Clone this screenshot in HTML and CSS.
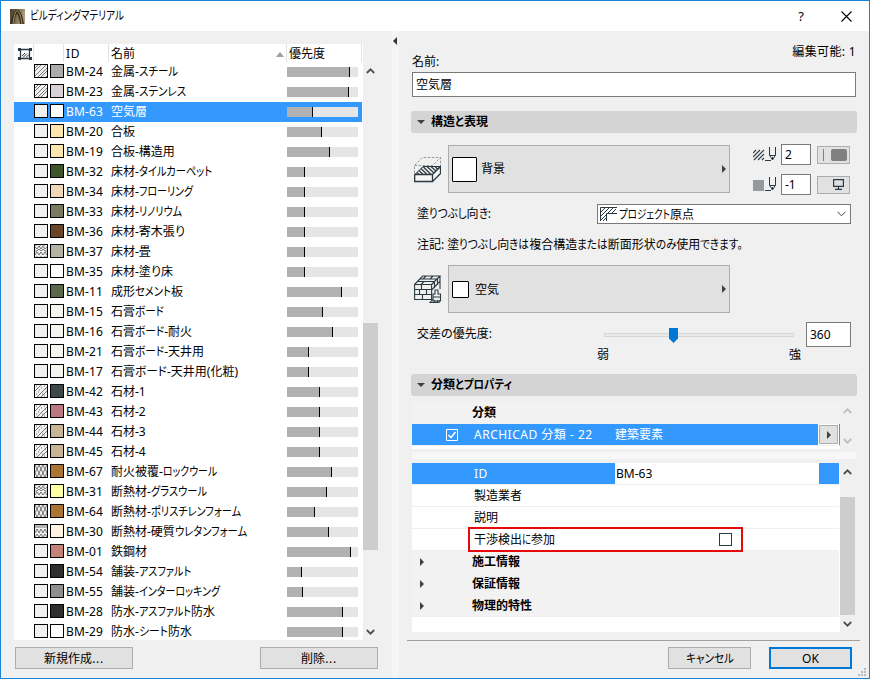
FILE: index.html
```html
<!DOCTYPE html>
<html lang="ja">
<head>
    <meta charset="UTF-8">
    <title>ビルディングマテリアル</title>
    <link rel="stylesheet" href="styles.css">
</head>
<body>
<div class="window">
    <div class="titlebar">
        <svg class="app-icon" width="15" height="15" viewBox="0 0 15 15">
            <defs><linearGradient id="bronze" x2="1" y2=".3"><stop offset="0" stop-color="#4a3d2d"/><stop offset=".5" stop-color="#75654a"/><stop offset="1" stop-color="#b0a080"/></linearGradient></defs>
            <rect width="15" height="15" fill="url(#bronze)"/>
            <path d="M0 15C2 7 4 1 7 1c4 0 6 7 7 14h-4C9 8 8 5 7 5c-1 0-2 4-3 10z" fill="#3a2e20"/>
            <path d="M3 15C4 8 5 2 7 2c2 0 4 5 5 13" fill="none" stroke="#a8946c"/>
        </svg>
        <span class="title" data-w="94">ビルディングマテリアル</span>
        <span class="help">?</span>
        <svg class="close" width="11" height="11" viewBox="0 0 11 11"><path d="M.5.5l10 10M10.5.5l-10 10" stroke="#000" stroke-width="1.1"/></svg>
    </div>

    <div class="main">
        <!-- Lista de materiales -->
        <div class="left">
            <div class="list-wrap">
                <div class="list">
                    <div class="list-head">
                        <span class="h-icon"><svg width="14" height="12" viewBox="0 0 14 12" fill="none" stroke="#2b3a42"><path d="M1 1.500h12M1 10.500h12M2.500 2v8M11.500 2v8" stroke-width="1.300"/><path d="M4 8l3-3M5 9.500l4-4M8 9.500l3-3"/><path d="M0 0h3v3H0zM11 0h3v3h-3zM0 9h3v3H0zM11 9h3v3h-3z" fill="#2b3a42" stroke="none"/></svg></span>
                        <span class="h-swatch"></span>
                        <span class="h-id">ID</span>
                        <span class="h-name">名前<i class="sort"></i></span>
                        <span class="h-prio">優先度</span>
                    </div>
                    <div id="rows"></div>
                </div>
                <div class="scroll tall">
                    <svg class="chev" width="9" height="6" viewBox="0 0 9 6"><path d="M.8 5l3.700-3.700L8.200 5"/></svg>
                    <div class="thumb"></div>
                    <svg class="chev down" width="9" height="6" viewBox="0 0 9 6"><path d="M.8 1l3.700 3.700L8.200 1"/></svg>
                </div>
            </div>
            <div class="left-buttons">
                <button>新規作成<span class="dots">...</span></button>
                <button>削除<span class="dots">...</span></button>
            </div>
        </div>

        <div class="splitter"><i class="collapse"></i></div>

        <!-- Panel de propiedades -->
        <div class="right">
            <div class="name-row"><span class="name-label">名前:</span><span class="editable">編集可能: 1</span></div>
            <div class="field name-field">空気層</div>

            <div class="section-bar first"><i class="open"></i><span data-w="57">構造と表現</span></div>

            <div class="fill-row">
                <svg width="27" height="26" viewBox="0 0 27 26" fill="none" stroke="#2b3a42">
                    <path d="M.5 16V8.500L8.500.5h18V9M.5 8.500h18l8-8M18.500 8.500v3" stroke="#999" stroke-dasharray="2.500 1.500"/>
                    <path d="M1 17.500l8-8h17l-7.500 8z" fill="#f0f0f0"/>
                    <path d="M3 15.500l2 2M5 13.500l4 4M7 11.500l6 6M9 9.500l8 8M13 9.500l7 6.500M17 9.500l5 4.500M21 9.500l3 3" stroke-width="1.200"/>
                    <path d="M.7 17.500h17.800v7H.7zM18.500 17.500l8-8v7l-8 8" stroke-width="1.300" fill="#f6f6f6"/>
                </svg>
                <div class="picker"><i class="box big"></i><span>背景</span><i class="arrow"></i></div>
                <div class="pens">
                    <div class="pen">
                        <svg width="24" height="16" viewBox="0 0 24 16" fill="none" stroke="#2b3a42"><path d="M0 6l3-3M0 10l7-7M1 13l10-10M5 13l6-6M9 13l2-2" stroke-width="1.100"/><path d="M12 13.500h6M16.500 0v8l3 5 3-5V0M16.500 8.500h6M19.500 10v3"/></svg>
                        <div class="field num">2</div>
                        <div class="mini"><i class="line"></i><i class="pill"></i></div>
                    </div>
                    <div class="pen">
                        <svg width="24" height="16" viewBox="0 0 24 16" fill="none" stroke="#2b3a42"><path d="M0 3h11v11H0z" fill="#949a9e" stroke="none"/><path d="M12 13.500h6M16.500 0v8l3 5 3-5V0M16.500 8.500h6M19.500 10v3"/></svg>
                        <div class="field num">-1</div>
                        <div class="mini"><svg width="11" height="11" viewBox="0 0 11 11" fill="none" stroke="#2b3a42" stroke-width="1.200"><path d="M.6.6h9.800v6.800H.6zM5.500 7.500v3M2 10.400h7"/></svg></div>
                    </div>
                </div>
            </div>

            <div class="orient-row">
                <span data-w="74">塗りつぶし向き:</span>
                <div class="select">
                    <svg width="17" height="14" viewBox="0 0 17 14" fill="none" stroke="#2b3a42"><path d="M.5 14V.5H17M6.500 14V6.500H17"/><path d="M1 5l4-4M1 9l8-8M1 13l5-5M8 6l5-5M12 6l4-4M3 14l3-3"/></svg>
                    <span data-w="75">プロジェクト原点</span>
                    <svg class="drop" width="9" height="6" viewBox="0 0 9 6"><path d="M.5.8l4 4 4-4" fill="none" stroke="#444"/></svg>
                </div>
            </div>
            <div class="note"><span data-w="326">注記: 塗りつぶし向きは複合構造または断面形状のみ使用できます。</span></div>

            <div class="surface-row">
                <svg width="28" height="29" viewBox="0 0 28 29" fill="none" stroke="#2b3a42" stroke-width="1.100">
                    <path d="M.6 9.500h17v15H.6zM.6 14.500h17M.6 19.500h17M7.500 9.500v5M12.500 14.500v5M5.500 14.500v5M8.500 19.500v5"/>
                    <path d="M.6 9.500l8-8.500h17.400l-8.400 8.500M3 6.500h17.500M6 4h17M12 1l-3 3M19 1l-3 3M10 6.500l-3 3M26 1v13M17.600 15l3-3M20.500 7v6M23.500 4v6M20.500 12l3-3M23.500 9l2.500-3"/>
                    <path d="M21 19v-4h3v4h2.500v7H19v-7zM19 22h7.500M19 24l-3 3.500h9l1.500-3M20 27l1-2M23 27l1-2" fill="#f0f0f0"/>
                </svg>
                <div class="picker"><i class="box"></i><span>空気</span><i class="arrow"></i></div>
            </div>

            <div class="priority-row">
                <span data-w="75">交差の優先度:</span>
                <div class="slider">
                    <div class="track"><svg class="knob" width="9" height="15" viewBox="0 0 9 15"><path d="M0 0h9v10.500L4.500 15 0 10.500z" fill="#0078d7"/></svg></div>
                    <div class="ends"><span>弱</span><span>強</span></div>
                </div>
                <div class="field prio">360</div>
            </div>

            <div class="section-bar"><i class="open"></i><span data-w="81">分類とプロパティ</span></div>

            <div class="table classes">
                <div class="cells">
                    <div class="row group"><b>分類</b></div>
                    <div class="row sel">
                        <svg class="check" width="12" height="12" viewBox="0 0 12 12" fill="none" stroke="#fff"><path d="M.5.5h11v11H.5z"/><path d="M2.500 6l2.500 2.500L9.500 3" stroke-width="1.600"/></svg>
                        <span class="key latin">ARCHICAD 分類 - 22</span><span class="val">建築要素</span>
                        <div class="more"><i class="arrow"></i></div>
                    </div>
                </div>
                <div class="scroll off">
                    <svg class="chev" width="9" height="6" viewBox="0 0 9 6"><path d="M.8 5l3.700-3.700L8.200 5"/></svg>
                    <svg class="chev down" width="9" height="6" viewBox="0 0 9 6"><path d="M.8 1l3.700 3.700L8.200 1"/></svg>
                </div>
            </div>
            <div class="grab"></div>
            <div class="table props">
                <div class="cells">
                    <div class="row sel id"><span class="key latin">ID</span><span class="val edit">BM-63</span></div>
                    <div class="row"><span class="key">製造業者</span></div>
                    <div class="row"><span class="key">説明</span></div>
                    <div class="row clash"><span class="key" data-w="81">干渉検出に参加</span><i class="tick"></i><div class="highlight"></div></div>
                    <div class="row group"><i class="arrow"></i><b>施工情報</b></div>
                    <div class="row group"><i class="arrow"></i><b>保証情報</b></div>
                    <div class="row group"><i class="arrow"></i><b>物理的特性</b></div>
                </div>
                <div class="scroll short">
                    <svg class="chev" width="9" height="6" viewBox="0 0 9 6"><path d="M.8 5l3.700-3.700L8.200 5"/></svg>
                    <div class="thumb"></div>
                    <svg class="chev down" width="9" height="6" viewBox="0 0 9 6"><path d="M.8 1l3.700 3.700L8.200 1"/></svg>
                </div>
            </div>

            <div class="footer">
                <button><span data-w="48">キャンセル</span></button>
                <button class="ok">OK</button>
            </div>
        </div>
    </div>
    <svg class="grip" width="8" height="8" viewBox="0 0 8 8" fill="#bbb"><path d="M6 0h2v2H6zM3 3h2v2H3zM6 3h2v2H6zM0 6h2v2H0zM3 6h2v2H3zM6 6h2v2H6z"/></svg>
</div>
<script src="script.js"></script>
</body>
</html>
```
FILE: styles.css
```css
* { box-sizing: border-box; }
body { margin: 0; font-family: "Noto Sans", "Noto Sans CJK JP", sans-serif; font-size: 12px; line-height: 18px; color: #000; }
i { display: block; font-style: normal; }
svg { display: block; flex: none; }
span, b { white-space: nowrap; }
.kana { display: inline-block; font-feature-settings: "palt"; transform-origin: 0 50%; }
.dots { letter-spacing: .7px; }
.latin { letter-spacing: .5px; }

.window { position: relative; width: 870px; height: 679px; border: 1px solid #1883d7; background: #f0f0f0; overflow: hidden; }
.titlebar { display: flex; align-items: center; height: 30px; padding: 0 17px 0 9px; background: #fff; }
.title { margin-left: 5px; }
.help { margin-left: auto; font-size: 13px; }
.close { margin-left: 37px; }
.main { display: flex; height: 647px; }
button { height: 22px; padding: 0; border: 1px solid #adadad; background: #e1e1e1; font: inherit; line-height: 19px; color: #000; }

/* lista */
.left { width: 391px; padding: 13px 0 0 13px; }
.list-wrap { display: flex; height: 596px; }
.list { width: 349px; background: #fff; overflow: hidden; }
.list-head { display: flex; height: 18px; line-height: 20px; }
.list-head > span { border-right: 1px solid #e3e3e3; }
.h-icon { width: 20px; padding: 4px 0 0 4px; }
.h-swatch { width: 30px; }
.h-id { width: 45px; padding-left: 2px; letter-spacing: .6px; }
.h-name { display: flex; align-items: center; justify-content: space-between; width: 178px; padding: 1px 2px 0; }
.h-prio { width: 75px; padding-left: 2px; }
.sort { border: 4.5px solid transparent; border-top: 0; border-bottom: 5px solid #a0a0a0; margin-top: 2px; }
.item { display: flex; align-items: center; width: 348px; height: 20px; padding-left: 20px; }
.item.selected { background: #39f; color: #fff; }
.swatch { width: 14px; height: 14px; margin: -2px 2px 0 0; border: 1px solid #000; background: #f0f0f0; }
.item .id { width: 45px; padding-bottom: 1px; letter-spacing: .15px; }
.item .name { width: 176px; padding-bottom: 1px; }
.bar { width: 71px; height: 10px; background: #e5e5e5; }
.bar i { height: 10px; background: #b1b1b1; border-right: 1px solid #000; }

.scroll { display: flex; flex-direction: column; align-items: center; width: 15px; background: #f0f0f0; }
.chev { fill: none; stroke: #505050; stroke-width: 1.8; }
.chev.down { margin-top: auto; }
.thumb { width: 15px; background: #cdcdcd; }
.tall { padding: 24px 0 5px; }
.tall .thumb { height: 227px; margin-top: 249px; }
.off .chev { stroke: #bfbfbf; }
.off { padding: 6px 0 5px; }
.short { padding: 6px 0 5px; }
.short .thumb { height: 118px; margin-top: 22px; }

.left-buttons { display: flex; gap: 127px; margin: 7px 0 0 1px; }
.left-buttons button { width: 118px; }
.splitter { width: 7px; padding: 6px 0 0 1px; background: #f5f5f5; }
.collapse { width: 4px; border: 4px solid transparent; border-left: 0; border-right-color: #333; }

/* propiedades */
.right { width: 470px; padding: 0 13px; }
.name-row { display: flex; justify-content: space-between; height: 41px; }
.name-label { padding-top: 22px; }
.editable { padding-top: 12px; letter-spacing: .35px; }
.field { border: 1px solid #7a7a7a; background: #fff; padding-left: 3px; }
.name-field { height: 25px; line-height: 23px; }
.section-bar { display: flex; align-items: center; height: 22px; margin: 0 -1px; padding-left: 6px; border-radius: 3px; background: #d4d4d4; font-weight: bold; }
.first { margin-top: 14px; }
.open { margin-right: 6px; border: 4px solid transparent; border-bottom: 0; border-top-color: #404040; }
.arrow { width: 4px; border: 4px solid transparent; border-right: 0; border-left-color: #404040; }
.picker { display: flex; align-items: center; width: 282px; height: 48px; padding: 0 3px; border: 1px solid #adadad; background: #e1e1e1; }
.picker span { padding-top: 1px; }
.picker .arrow { margin-left: auto; }
.box { width: 17px; height: 17px; margin-right: 6px; border: 1px solid #000; border-radius: 1px; background: #fff; }
.big { width: 25px; height: 25px; margin-right: 4px; }
.fill-row, .surface-row { display: flex; align-items: center; padding-left: 2px; }
.fill-row { height: 51px; margin-top: 11px; }
.fill-row .picker { margin: -1px 0 0 7px; }
.fill-row .picker span { padding-top: 0; }
.pens { display: flex; flex-direction: column; gap: 9px; margin-left: 23px; }
.pen { display: flex; align-items: center; }
.num { width: 30px; height: 21px; line-height: 19px; margin: 0 6px 0 4px; }
.mini { display: flex; align-items: center; justify-content: flex-end; width: 33px; height: 18px; padding-right: 2px; border: 1px solid #adadad; background: #e1e1e1; }
.mini svg { margin-right: 3px; }
.line { width: 1px; height: 12px; background: #808080; margin-right: 7px; }
.pill { width: 16px; height: 12px; border-radius: 2px; background: #808080; }
.orient-row { display: flex; align-items: center; justify-content: space-between; height: 20px; margin: 9px 5px 0; }
.select { display: flex; align-items: center; width: 254px; height: 20px; padding: 0 4px 0 2px; border: 1px solid #7a7a7a; background: #fff; }
.select span { margin-left: 1px; padding-top: 1px; }
.drop { margin-left: auto; }
.note { height: 18px; margin: 12px 5px -1px; }
.surface-row { margin-top: 12px; }
.surface-row .picker { margin-left: 6px; }
.priority-row { display: flex; height: 52px; margin: 9px 5px 0; line-height: 24px; }
.slider { margin-left: auto; width: 205px; }
.track { display: flex; width: 190px; height: 4px; margin: 11px 0 0 7px; border: 1px solid #d6d6d6; background: #e7eaea; }
.knob { margin: -6px 0 0 64px; }
.ends { display: flex; justify-content: space-between; line-height: 18px; margin: 9px 1px 0 0; }
.prio { width: 45px; height: 25px; line-height: 23px; margin-left: 4px; }

.table { display: flex; }
.cells { width: 428px; background: #fff; }
.row { display: flex; align-items: center; height: 22px; padding-left: 62px; border-bottom: 1px solid #f0f0f0; }
.group { padding-left: 60px; background: #f2f2f2; }
.group .arrow { margin: 0 48px 0 -52px; }
.sel { background: #39f; color: #fff; }
.classes { height: 47px; margin-top: 6px; }
.check { margin-left: -28px; }
.classes .key { width: 141px; margin-left: 16px; }
.more { display: flex; align-items: center; justify-content: center; width: 19px; height: 19px; margin-left: auto; border: 1px solid #adadad; background: #e1e1e1; outline: 1px solid #fff; }
.classes .sel { padding-right: 2px; }
.grab { height: 7px; margin: 3px 0 4px; background: #f7f7f7; }
.props { height: 169px; }
.id .key { width: 141px; }
.edit { width: 204px; height: 21px; padding-left: 1px; line-height: 21px; background: #fff; color: #000; }
.props .row { margin-right: 1px; }
.clash { position: relative; }
.tick { width: 13px; height: 13px; border: 1px solid #2b3a42; margin-left: 164px; }
.highlight { position: absolute; left: 56px; top: -2px; width: 275px; height: 25px; border: 2px solid #e60a0a; z-index: 1; }
.footer { display: flex; justify-content: flex-end; gap: 18px; margin: 8px -4px 0 -5px; padding: 6px 8px 0 0; border-top: 1px solid #a0a0a0; }
.footer button { width: 83px; }
.footer .ok { border: 2px solid #0078d7; line-height: 17px; }
.grip { position: absolute; right: 3px; bottom: 2px; }
```
FILE: script.js
```js
// id, nombre, trama, color, prioridad (px), ancho del nombre
const materiales = [
    ['24', '金属-スチール', 'steel', '#ababab', 62, 67],
    ['23', '金属-ステンレス', 'steel', '#d8d2d8', 61, 75],
    ['63', '空気層', '', '#ffffff', 25, 0],
    ['20', '合板', '', '#fbe6ae', 34, 0],
    ['19', '合板-構造用', '', '#fbe6ae', 42, 0],
    ['32', '床材-タイルカーペット', '', '#3d5529', 17, 101],
    ['34', '床材-フローリング', '', '#eed8b8', 17, 82],
    ['33', '床材-リノリウム', '', '#7a7a60', 17, 71],
    ['36', '床材-寄木張り', '', '#6b4528', 17, 74],
    ['37', '床材-畳', 'net', '#b4b2a2', 17, 0],
    ['35', '床材-塗り床', '', '#ffffff', 17, 62],
    ['11', '成形セメント板', '', '#5b684c', 54, 72],
    ['15', '石膏ボード', '', '#f3f6ef', 35, 53],
    ['16', '石膏ボード-耐火', '', '#f3f6ef', 45, 81],
    ['21', '石膏ボード-天井用', '', '#f3f6ef', 21, 93],
    ['17', '石膏ボード-天井用(化粧)', '', '#f3f6ef', 21, 127],
    ['42', '石材-1', 'stone', '#3d4848', 32, 0],
    ['43', '石材-2', 'stone', '#ba7880', 32, 0],
    ['44', '石材-3', 'stone', '#c7b494', 32, 0],
    ['45', '石材-4', 'stone', '#c7b494', 32, 0],
    ['67', '耐火被覆-ロックウール', 'wave', '#ab7435', 44, 106],
    ['31', '断熱材-グラスウール', 'net', '#ffffa5', 39, 96],
    ['64', '断熱材-ポリスチレンフォーム', 'wave', '#ab7435', 27, 130],
    ['30', '断熱材-硬質ウレタンフォーム', 'zig', '#fff2e0', 41, 136],
    ['01', '鉄鋼材', '', '#c48278', 63, 0],
    ['54', '舗装-アスファルト', '', '#2e2e2e', 14, 80],
    ['55', '舗装-インターロッキング', '', '#8e8e8e', 15, 109],
    ['28', '防水-アスファルト防水', '', '#2e2e2e', 55, 104],
    ['29', '防水-シート防水', '', '#ffffff', 55, 81]
];

const tramas = {
    steel: 'M0 3l3-3M0 6l6-6M0 11L11 0M3 12l9-9M6 12l6-6M11 12l1-1',
    stone: 'M0 6l6-6M6 12l6-6M2 12L12 2M1 1h1M9 1h1M1 9h1M3 7h1M9 11h1M6 3h1M10 4h1M4 5h1M7 9h1',
    net: 'M0 2l2 2 2-3 2 3 2-3 2 3 2-2M0 6h2l2-2 2 2 2-2 2 2h2M0 10l2-3 2 3 2-3 2 3 2-3 2 3M1 0v1M5 0v1M9 0v1M2 12v-1M6 12v-1M10 12v-1',
    wave: 'M0 0l2 4-2 4 2 4M4 0L2 4l2 4-2 4M4 0l2 4-2 4 2 4M8 0L6 4l2 4-2 4M8 0l2 4-2 4 2 4M12 0l-2 4 2 4-2 4',
    zig: 'M1 0v3M3 0v3M5 0v3M7 0v3M9 0v3M11 0v3M0 8l2-4 2 4 2-4 2 4 2-4 2 4M0 12l2-3 2 3 2-3 2 3 2-3 2 3'
};

document.getElementById('rows').innerHTML = materiales.map(([id, nombre, trama, color, prio, w]) => `
    <div class="item${id === '63' ? ' selected' : ''}">
        <i class="swatch">${trama ? `<svg width="12" height="12" viewBox="0 0 12 12"><path d="${tramas[trama]}" fill="none" stroke="#444" stroke-width=".7"/></svg>` : ''}</i>
        <i class="swatch" style="background:${color}"></i>
        <span class="id">BM-${id}</span>
        <div class="name"><span data-w="${w}">${nombre}</span></div>
        <div class="bar"><i style="width:${prio + 1}px"></i></div>
    </div>
`).join('');

// estrecha solo los kana; los kanji conservan su ancho
document.querySelectorAll('[data-w]').forEach(el => {
    const ancho = Number(el.dataset.w);
    if (!ancho) return;
    el.innerHTML = el.textContent.replace(/[ぁ-んァ-ンー。]+/g, '<span class="kana">$&</span>');
    const range = document.createRange();
    range.selectNodeContents(el);
    const total = range.getBoundingClientRect().width;
    const kana = [...el.querySelectorAll('.kana')];
    const anchos = kana.map(k => k.getBoundingClientRect().width);
    const suma = anchos.reduce((a, b) => a + b, 0);
    const escala = (ancho - (total - suma)) / suma;
    kana.forEach((k, i) => {
        k.style.transform = `scaleX(${escala})`;
        k.style.marginRight = `${anchos[i] * (escala - 1)}px`;
    });
});
```
